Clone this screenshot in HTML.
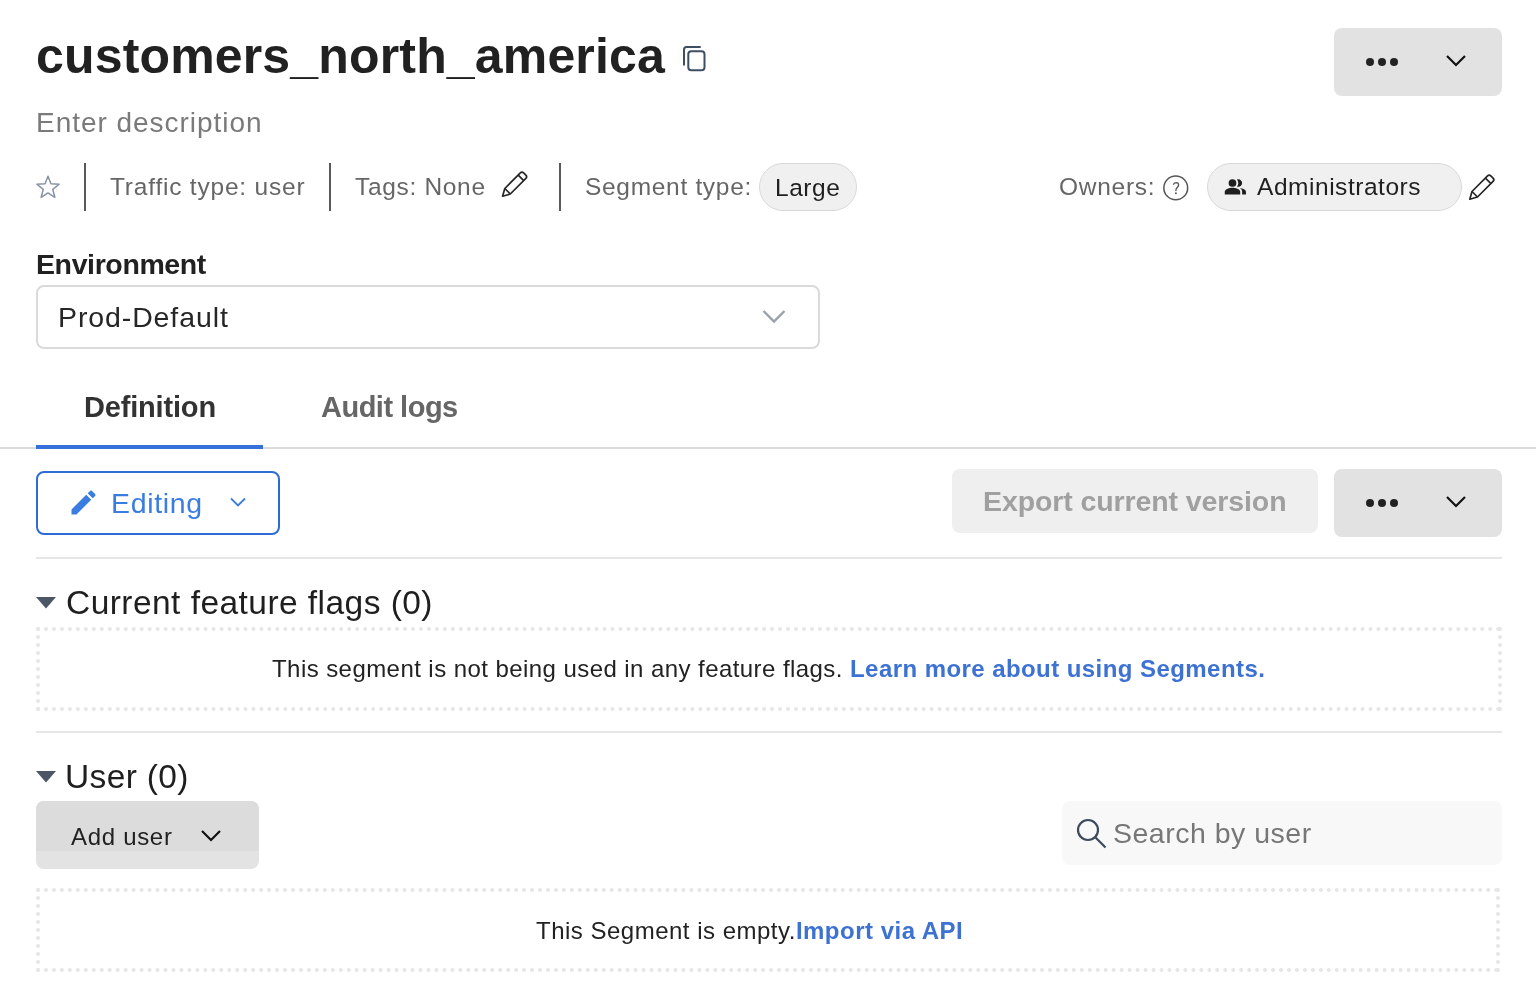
<!DOCTYPE html>
<html><head><meta charset="utf-8">
<style>
*{margin:0;padding:0;box-sizing:border-box}
html,body{width:1536px;height:1002px;overflow:hidden;background:#fff}
body{position:relative;font-family:"Liberation Sans",sans-serif;color:#222}
.a{position:absolute;white-space:nowrap;line-height:1;will-change:transform}
svg{position:absolute;overflow:visible;left:0;top:0}
.sep{position:absolute;width:2px;background:#595959;top:163px;height:48px}
.pill{position:absolute;top:163px;height:48px;border:1px solid #d9d9d9;background:#f0f0f0;border-radius:24px}
.btn{position:absolute;border-radius:8px}
.hr{position:absolute;height:2px;background:#e6e6e6}
.dot{position:absolute;border:4px dotted #e6e6e6}
.lk{color:#3d72d3;font-weight:bold}
</style></head><body>
<div class="a" style="left:35.84px;top:31.00px;font-size:50px;color:#212121;letter-spacing:0.161px;font-weight:bold">customers_north_america</div>
<div class="btn" style="left:1334px;top:28px;width:168px;height:68px;background:#e2e2e2"></div>
<div class="a" style="left:36.12px;top:109.00px;font-size:28px;color:#7a7a7a;letter-spacing:0.966px">Enter description</div>
<div class="sep" style="left:84px"></div>
<div class="a" style="left:110.00px;top:175.00px;font-size:24.5px;color:#666;letter-spacing:0.793px">Traffic type: user</div>
<div class="sep" style="left:329px"></div>
<div class="a" style="left:355.16px;top:175.00px;font-size:24.5px;color:#666;letter-spacing:0.674px">Tags: None</div>
<div class="sep" style="left:559px"></div>
<div class="a" style="left:584.84px;top:175.00px;font-size:24.5px;color:#666;letter-spacing:0.689px">Segment type:</div>
<div class="pill" style="left:759px;width:98px"></div>
<div class="a" style="left:775.00px;top:176.00px;font-size:24.5px;color:#1f1f1f;letter-spacing:0.525px">Large</div>
<div class="a" style="left:1058.80px;top:175.00px;font-size:24.5px;color:#666;letter-spacing:0.726px">Owners:</div>
<div class="pill" style="left:1207px;width:255px"></div>
<div class="a" style="left:1256.84px;top:175.00px;font-size:24.5px;color:#1f1f1f;letter-spacing:0.538px">Administrators</div>
<div class="a" style="left:36.16px;top:250.00px;font-size:28.5px;color:#212121;letter-spacing:-0.385px;font-weight:bold">Environment</div>
<div class="btn" style="left:36px;top:285px;width:784px;height:64px;border:2px solid #dadada"></div>
<div class="a" style="left:57.84px;top:303.00px;font-size:28.5px;color:#262626;letter-spacing:0.891px">Prod-Default</div>
<div class="a" style="left:83.52px;top:393.00px;font-size:29px;color:#333;letter-spacing:-0.177px;font-weight:bold">Definition</div>
<div class="a" style="left:321.16px;top:393.00px;font-size:29px;color:#666;letter-spacing:-0.504px;font-weight:bold">Audit logs</div>
<div class="hr" style="left:0;top:447px;width:1536px;background:#dadada"></div>
<div style="position:absolute;left:36px;top:445px;width:227px;height:4px;background:#3571d8"></div>
<div class="btn" style="left:36px;top:471px;width:244px;height:64px;border:2px solid #2f6bd5"></div>
<div class="a" style="left:111.02px;top:489.00px;font-size:28.5px;color:#3a7de0;letter-spacing:0.660px">Editing</div>
<div class="btn" style="left:952px;top:469px;width:366px;height:64px;background:#efefef"></div>
<div class="a" style="left:983.02px;top:487.00px;font-size:28.5px;color:#a0a0a0;letter-spacing:-0.099px;font-weight:bold">Export current version</div>
<div class="btn" style="left:1334px;top:469px;width:168px;height:68px;background:#e2e2e2"></div>
<div class="hr" style="left:36px;top:557px;width:1466px"></div>
<div class="a" style="left:66.00px;top:586.00px;font-size:33.5px;color:#1f1f1f;letter-spacing:0.453px">Current feature flags (0)</div>
<div class="dot" style="left:36px;top:627px;width:1466px;height:84px"></div>
<div class="a" style="left:272.48px;top:657.00px;font-size:24px;color:#222;letter-spacing:0.434px">This segment is not being used in any feature flags. <span class="lk">Learn more about using Segments.</span></div>
<div class="hr" style="left:36px;top:731px;width:1466px"></div>
<div class="a" style="left:64.88px;top:760.00px;font-size:33.5px;color:#1f1f1f;letter-spacing:0.353px">User (0)</div>
<div class="btn" style="left:36px;top:801px;width:223px;height:68px;background:#e3e3e3;overflow:hidden"><div style="height:50px;background:#dcdcdc"></div></div>
<div class="a" style="left:70.52px;top:825.00px;font-size:24px;color:#222;letter-spacing:0.692px">Add user</div>
<div class="btn" style="left:1062px;top:801px;width:440px;height:64px;background:#f8f8f8"></div>
<div class="a" style="left:1113.00px;top:819.00px;font-size:28.5px;color:#777;letter-spacing:0.501px">Search by user</div>
<div class="dot" style="left:36px;top:888px;width:1464px;height:84px"></div>
<div class="a" style="left:535.64px;top:919.00px;font-size:24px;color:#222;letter-spacing:0.495px">This Segment is empty.<span class="lk">Import via API</span></div>
<svg width="1536" height="1002">
  <path d="M684 64.8 V49.5 Q684 47 686.5 47 H700" fill="none" stroke="#3f4f63" stroke-width="2" stroke-linecap="round"/>
  <rect x="688.3" y="51.2" width="16.2" height="19.1" rx="3" fill="none" stroke="#3f4f63" stroke-width="2"/>
  <circle cx="1370" cy="62" r="4" fill="#222"/><circle cx="1382" cy="62" r="4" fill="#222"/><circle cx="1394" cy="62" r="4" fill="#222"/>
  <path d="M1447 56 L1456 65 L1465 56" fill="none" stroke="#111" stroke-width="2.2"/>
  <path d="M48.00 176.20 L50.94 183.85 L59.13 184.28 L52.76 189.45 L54.88 197.37 L48.00 192.90 L41.12 197.37 L43.24 189.45 L36.87 184.28 L45.06 183.85 Z" fill="none" stroke="#8893a5" stroke-width="1.5" stroke-linejoin="round"/>
  <g transform="translate(502.6,196.2) rotate(-45)" fill="none" stroke="#262626" stroke-width="1.7" stroke-linejoin="round">
    <path d="M0 0 L7 -3.9 L29 -3.9 Q31.3 -3.9 31.3 -1.6 L31.3 1.6 Q31.3 3.9 29 3.9 L7 3.9 Z"/>
    <path d="M7 -3.9 L7 3.9 M26 -3.9 L26 3.9"/></g>
  <g transform="translate(1469.8,199.2) rotate(-45)" fill="none" stroke="#262626" stroke-width="1.7" stroke-linejoin="round">
    <path d="M0 0 L7 -3.9 L29 -3.9 Q31.3 -3.9 31.3 -1.6 L31.3 1.6 Q31.3 3.9 29 3.9 L7 3.9 Z"/>
    <path d="M7 -3.9 L7 3.9 M26 -3.9 L26 3.9"/></g>
  <circle cx="1175.75" cy="187.9" r="11.9" fill="none" stroke="#555" stroke-width="1.5"/>
  <path d="M1173.6 184.2 Q1174.3 182.6 1176.3 182.6 Q1178.7 182.7 1178.6 184.9 Q1178.5 186.4 1177 187.7 Q1175.9 188.7 1175.9 190.6" fill="none" stroke="#555" stroke-width="1.4" stroke-linecap="round"/>
  <circle cx="1175.9" cy="193.2" r="0.95" fill="#555"/>
  <g transform="translate(1223.8,175.3) scale(0.964)" fill="#1f1f1f">
    <path d="M16.67 13.13C18.04 14.06 19 15.32 19 17v3h4v-3c0-2.18-3.57-3.47-6.33-3.87z"/>
    <circle cx="9" cy="8" r="4"/>
    <path d="M15 12c2.21 0 4-1.79 4-4s-1.79-4-4-4c-.47 0-.91.1-1.33.24C14.5 5.27 15 6.58 15 8s-.5 2.73-1.33 3.76c.42.14.86.24 1.33.24z"/>
    <path d="M9 13c-2.67 0-8 1.34-8 4v3h16v-3c0-2.66-5.33-4-8-4z"/>
  </g>
  <path d="M763.5 311 L774 321.5 L784.5 311" fill="none" stroke="#9aa1ab" stroke-width="2.4"/>
  <g transform="translate(67.5,486.5) scale(1.3333)"><path fill="#3a7de0" d="M3 17.25V21h3.75L17.81 9.94l-3.75-3.75L3 17.25zM20.71 7.04c.39-.39.39-1.020 0-1.41l-2.34-2.34c-.39-.39-1.02-.39-1.41 0l-1.83 1.83 3.75 3.75 1.83-1.83z"/></g>
  <path d="M231 498.5 L238 505.5 L245 498.5" fill="none" stroke="#3a7de0" stroke-width="1.8"/>
  <circle cx="1370" cy="503" r="4" fill="#222"/><circle cx="1382" cy="503" r="4" fill="#222"/><circle cx="1394" cy="503" r="4" fill="#222"/>
  <path d="M1447 497 L1456 506 L1465 497" fill="none" stroke="#111" stroke-width="2.2"/>
  <path d="M36 597 H56 L46 608.5 Z" fill="#4b5666"/>
  <path d="M36 771 H56 L46 782.5 Z" fill="#4b5666"/>
  <path d="M202 831 L211 840 L220 831" fill="none" stroke="#111" stroke-width="2.2"/>
  <circle cx="1088" cy="830" r="10" fill="none" stroke="#3c4a5c" stroke-width="2.2"/>
  <path d="M1095.3 837.3 L1105.5 847.5" fill="none" stroke="#3c4a5c" stroke-width="2.2"/>
</svg>
</body></html>
